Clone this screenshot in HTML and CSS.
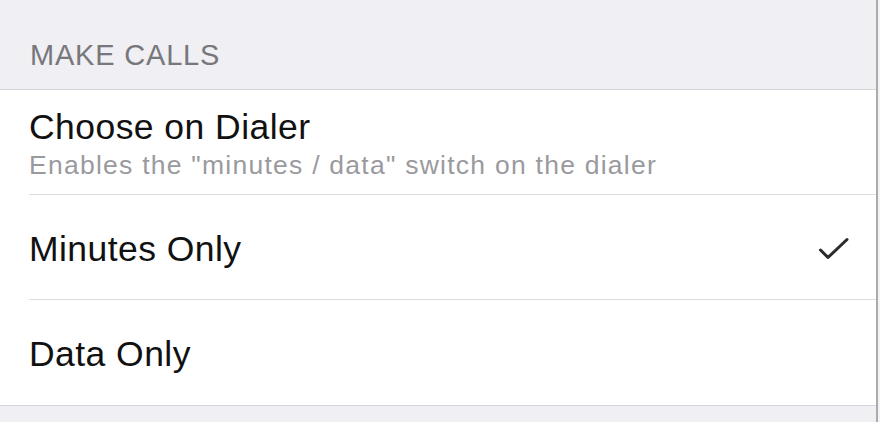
FILE: index.html
```html
<!DOCTYPE html>
<html>
<head>
<meta charset="utf-8">
<link rel="stylesheet" href="styles.css">
</head>
<body>
<div class="screen">
  <div class="section-header">MAKE CALLS</div>
  <div class="list">
    <div class="row">
      <div class="texts">
        <div class="title">Choose on Dialer</div>
        <div class="subtitle">Enables the "minutes / data" switch on the dialer</div>
      </div>
    </div>
    <div class="row single">
      <div class="title">Minutes Only</div>
      <svg class="check" width="32" height="24" viewBox="0 0 32 24"><path d="M2.5 13 L10 20.5 L29 2.5" fill="none" stroke="#2b2b2b" stroke-width="3" stroke-linecap="round" stroke-linejoin="round"/></svg>
    </div>
    <div class="row single last">
      <div class="title">Data Only</div>
    </div>
  </div>
</div>
</body>
</html>
```

FILE: styles.css
```css
html, body {
  margin: 0;
  padding: 0;
  background: #f3f3f5;
}
body {
  width: 880px;
  height: 422px;
  overflow: hidden;
  font-family: "Liberation Sans", Arial, sans-serif;
}
.screen {
  width: 876px;
  height: 422px;
  background: #efeff4;
  border-right: 2px solid #ababab;
}
.section-header {
  height: 50px;
  padding: 39px 0 0 30px;
  font-size: 29px;
  line-height: 32px;
  letter-spacing: 0.8px;
  color: #77777c;
  border-bottom: 1px solid #d6d6da;
}
.list {
  background: #ffffff;
  border-bottom: 1px solid #d6d6da;
}
.row {
  margin-left: 29px;
  padding: 16px 26px 13px 0;
  display: flex;
  align-items: center;
  justify-content: space-between;
  border-bottom: 1px solid #dcdce0;
}
.row.single {
  padding-top: 33px;
  padding-bottom: 29px;
  height: 42px;
}
.row.last {
  border-bottom: none;
  padding-bottom: 30px;
}
.texts {
  display: flex;
  flex-direction: column;
  gap: 1px;
}
.title {
  font-size: 35.5px;
  line-height: 42px;
  letter-spacing: 0.45px;
  color: #111111;
}
.subtitle {
  font-size: 26.5px;
  line-height: 32px;
  color: #9a9a9e;
  letter-spacing: 1.25px;
}
.check {
  display: block;
  margin-top: 0;
}
```
